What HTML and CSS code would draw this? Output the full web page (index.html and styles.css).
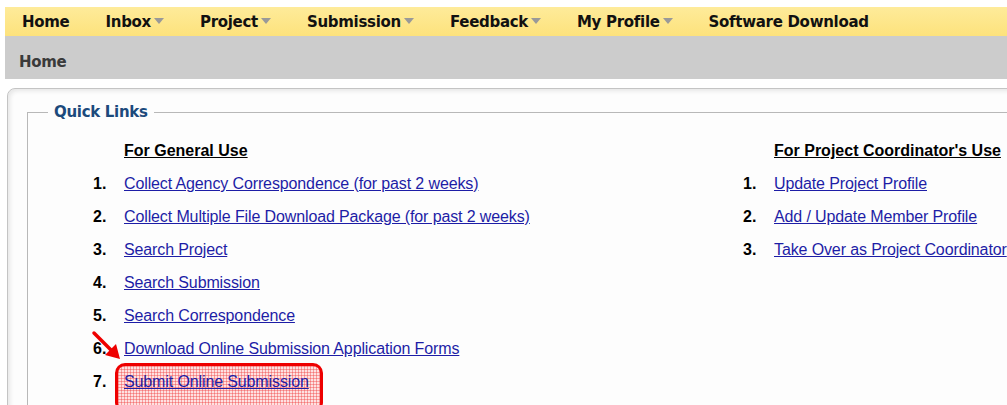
FILE: index.html
```html
<!DOCTYPE html>
<html>
<head>
<meta charset="utf-8">
<title>Home</title>
<link rel="stylesheet" href="styles.css">
</head>
<body>
<div class="page">
  <nav class="menubar">
    <span class="menu-item">Home</span>
    <span class="menu-item has-sub">Inbox</span>
    <span class="menu-item has-sub">Project</span>
    <span class="menu-item has-sub">Submission</span>
    <span class="menu-item has-sub">Feedback</span>
    <span class="menu-item has-sub">My Profile</span>
    <span class="menu-item">Software Download</span>
  </nav>
  <div class="crumb">Home</div>
  <div class="panel">
    <fieldset class="quick">
      <legend>Quick Links</legend>
      <div class="columns">
        <div class="col col-general">
          <h3 class="col-title">For General Use</h3>
          <ol class="links">
            <li><span class="num">1.</span><a href="#">Collect Agency Correspondence (for past 2 weeks)</a></li>
            <li><span class="num">2.</span><a href="#">Collect Multiple File Download Package (for past 2 weeks)</a></li>
            <li><span class="num">3.</span><a href="#">Search Project</a></li>
            <li><span class="num">4.</span><a href="#">Search Submission</a></li>
            <li><span class="num">5.</span><a href="#">Search Correspondence</a></li>
            <li><span class="num">6.</span><a href="#">Download Online Submission Application Forms</a></li>
            <li class="marked"><span class="num">7.</span><a href="#">Submit Online Submission</a>
              <span class="mark-box"></span>
              <svg class="mark-arrow" width="34" height="34" viewBox="0 0 34 34">
                <line x1="3" y1="3" x2="22" y2="22" stroke="#ee0000" stroke-width="3.5" stroke-linecap="round"/>
                <polygon points="29,29 14,25 25,14" fill="#ee0000"/>
              </svg>
            </li>
          </ol>
        </div>
        <div class="col col-coord">
          <h3 class="col-title">For Project Coordinator's Use</h3>
          <ol class="links">
            <li><span class="num">1.</span><a href="#">Update Project Profile</a></li>
            <li><span class="num">2.</span><a href="#">Add / Update Member Profile</a></li>
            <li><span class="num">3.</span><a href="#">Take Over as Project Coordinator</a></li>
          </ol>
        </div>
      </div>
    </fieldset>
  </div>
</div>
</body>
</html>
```
FILE: styles.css
```css
html, body {
  margin: 0;
  padding: 0;
  background: #ffffff;
  overflow: hidden;
}

.page {
  padding: 7px 0 0 5px;
  width: 1100px;
}

/* top menu */
.menubar {
  display: flex;
  align-items: center;
  height: 29px;
  padding-left: 17px;
  padding-top: 1px;
  box-sizing: border-box;
  background: linear-gradient(#feeb9a, #fde27c);
  font-family: "DejaVu Sans", Verdana, sans-serif;
  font-weight: bold;
  font-size: 15px;
  color: #111;
  letter-spacing: -0.3px;
}

.menu-item {
  display: inline-flex;
  align-items: center;
  margin-right: 36px;
  white-space: nowrap;
}

.menu-item.has-sub::after {
  content: "";
  display: inline-block;
  margin-left: 3px;
  margin-bottom: 3px;
  border-left: 5px solid transparent;
  border-right: 5px solid transparent;
  border-top: 6px solid #999999;
}

/* breadcrumb strip */
.crumb {
  height: 43px;
  background: #cccccc;
  padding: 17px 0 0 14px;
  box-sizing: border-box;
  font-family: "DejaVu Sans", Verdana, sans-serif;
  font-weight: bold;
  font-size: 15px;
  line-height: 18px;
  color: #3a3a3a;
  letter-spacing: -0.3px;
}

/* content panel */
.panel {
  margin: 9px 0 0 2px;
  border: 1px solid #c4c4c4;
  border-radius: 8px;
  box-shadow: inset 2px 2px 4px #e6e6e6;
  background: #fdfdfd;
  padding: 14px 0 0 19px;
  height: 330px;
  box-sizing: border-box;
}

.quick {
  margin: 0;
  padding: 0;
  border: 0;
  border-top: 1px solid #b8b8b8;
  border-left: 1px solid #b8b8b8;
  min-width: 0;
}

.quick legend {
  margin-left: 20px;
  padding: 0 6px;
  font-family: "DejaVu Sans", Verdana, sans-serif;
  font-weight: bold;
  font-size: 15px;
  color: #1c4a7c;
  letter-spacing: -0.3px;
}

.columns {
  display: flex;
  padding-top: 20px;
  font-family: "Liberation Sans", Arial, sans-serif;
  font-size: 16px;
}

.col-general {
  margin-left: 65px;
  width: 650px;
}

.col-title {
  margin: 0 0 0 31px;
  font-size: 16px;
  font-weight: bold;
  text-decoration: underline;
  color: #000;
  line-height: 20px;
  white-space: nowrap;
}

.links {
  list-style: none;
  margin: 13px 0 0;
  padding: 0;
}

.links li {
  position: relative;
  display: flex;
  height: 33px;
  line-height: 20px;
  white-space: nowrap;
}

.num {
  width: 31px;
  font-weight: bold;
  color: #000;
}

.links a {
  color: #1d1da6;
  text-decoration: underline;
  letter-spacing: -0.12px;
}

/* annotation highlighting item 7 */
.mark-box {
  position: absolute;
  left: 22px;
  top: -9px;
  width: 208px;
  height: 50px;
  border: 3px solid #ee0000;
  border-radius: 10px;
  box-sizing: border-box;
  background-color: rgba(255, 190, 190, 0.45);
  background-image:
    linear-gradient(90deg, rgba(240, 60, 60, 0.4) 1px, transparent 1px),
    linear-gradient(rgba(240, 60, 60, 0.4) 1px, transparent 1px);
  background-size: 3px 3px;
}

.mark-arrow {
  position: absolute;
  left: -2px;
  top: -42px;
}

.marked a {
  position: relative;
  z-index: 1;
}
```
